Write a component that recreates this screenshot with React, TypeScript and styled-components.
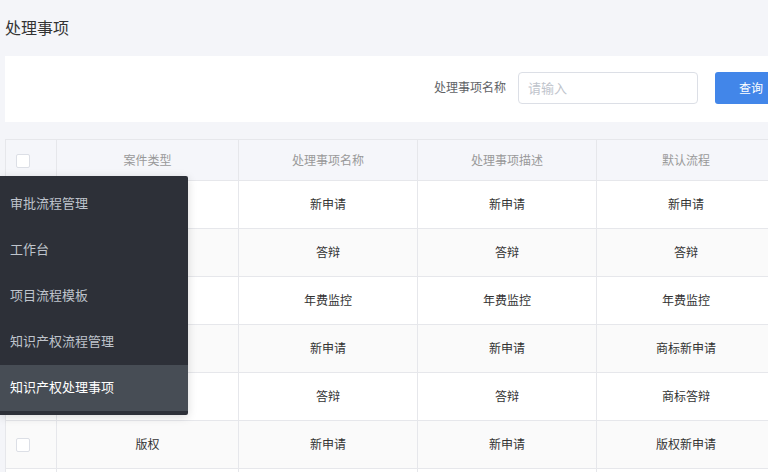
import React from 'react';
import styled, { createGlobalStyle } from 'styled-components';

const GlobalStyle = createGlobalStyle`
  html, body {
    margin: 0;
    padding: 0;
    background: #f4f5f9;
    overflow: hidden;
  }
  body {
    font-family: "Noto Sans CJK SC", "Noto Sans", sans-serif;
    color: #333;
  }
`;

interface RowType {
  caseType: string;
  name: string;
  desc: string;
  flow: string;
}

const rows: RowType[] = [
  { caseType: '专利', name: '新申请', desc: '新申请', flow: '新申请' },
  { caseType: '专利', name: '答辩', desc: '答辩', flow: '答辩' },
  { caseType: '专利', name: '年费监控', desc: '年费监控', flow: '年费监控' },
  { caseType: '商标', name: '新申请', desc: '新申请', flow: '商标新申请' },
  { caseType: '商标', name: '答辩', desc: '答辩', flow: '商标答辩' },
  { caseType: '版权', name: '新申请', desc: '新申请', flow: '版权新申请' },
];

const menuItems = ['审批流程管理', '工作台', '项目流程模板', '知识产权流程管理', '知识产权处理事项'];

const App: React.FC = () => {
  return (
    <Page>
      <GlobalStyle />
      <Content>
        <Title>处理事项</Title>
        <SearchPanel>
          <FieldLabel>处理事项名称</FieldLabel>
          <SearchInput placeholder="请输入" />
          <SearchButton>查询</SearchButton>
        </SearchPanel>
        <Table>
          <colgroup>
            <col style={{ width: 51 }} />
            <col style={{ width: 182 }} />
            <col style={{ width: 179 }} />
            <col style={{ width: 179 }} />
            <col style={{ width: 179 }} />
          </colgroup>
          <thead>
            <tr>
              <HeadCell>
                <Checkbox />
              </HeadCell>
              <HeadCell>案件类型</HeadCell>
              <HeadCell>处理事项名称</HeadCell>
              <HeadCell>处理事项描述</HeadCell>
              <HeadCell>默认流程</HeadCell>
            </tr>
          </thead>
          <tbody>
            {rows.map((row, i) => (
              <BodyRow key={i} striped={i % 2 === 1}>
                <Cell>
                  <Checkbox />
                </Cell>
                <Cell>{row.caseType}</Cell>
                <Cell>{row.name}</Cell>
                <Cell>{row.desc}</Cell>
                <Cell>{row.flow}</Cell>
              </BodyRow>
            ))}
            <BodyRow striped={false}>
              <Cell />
              <Cell />
              <Cell />
              <Cell />
              <Cell />
            </BodyRow>
          </tbody>
        </Table>
      </Content>
      <Menu>
        {menuItems.map((item, i) => (
          <MenuItem key={item} active={i === menuItems.length - 1}>
            {item}
          </MenuItem>
        ))}
      </Menu>
    </Page>
  );
};

// Styled Components

const Page = styled.div`
  position: relative;
  width: 768px;
  height: 472px;
  overflow: hidden;
  padding-left: 5px;
  box-sizing: border-box;
`;

const Content = styled.div`
  width: 800px;
`;

const Title = styled.div`
  height: 56px;
  padding-bottom: 3px;
  box-sizing: border-box;
  display: flex;
  align-items: center;
  font-size: 16px;
  color: #333;
`;

const SearchPanel = styled.div`
  height: 66px;
  box-sizing: border-box;
  background: #fff;
  display: flex;
  align-items: flex-start;
  justify-content: flex-end;
  padding: 16px 18px 0 0;
`;

const FieldLabel = styled.label`
  font-size: 12px;
  color: #606266;
  line-height: 30px;
  margin-right: 12px;
`;

const SearchInput = styled.input`
  width: 180px;
  height: 32px;
  box-sizing: border-box;
  border: 1px solid #dcdfe6;
  border-radius: 4px;
  padding: 0 9px 2px;
  font-family: inherit;
  font-size: 13px;
  color: #606266;
  outline: none;

  &::placeholder {
    color: #c0c4cc;
  }
`;

const SearchButton = styled.button`
  margin-left: 17px;
  width: 72px;
  height: 32px;
  padding: 0 0 2px;
  border: none;
  border-radius: 3px;
  background: #4286e9;
  color: #fff;
  font-family: inherit;
  font-size: 12px;
  cursor: pointer;
`;

const Table = styled.table`
  margin-top: 17px;
  width: 770px;
  table-layout: fixed;
  border-collapse: collapse;
  font-size: 12px;
`;

const HeadCell = styled.th`
  height: 38px;
  padding: 0 0 2px;
  background: #f5f6fa;
  border: 1px solid #e6e7eb;
  font-weight: normal;
  color: #999;
  text-align: center;

  &:first-child {
    text-align: left;
    padding-left: 10px;
  }
`;

const BodyRow = styled.tr<{ striped: boolean }>`
  background: ${(props) => (props.striped ? '#fafafa' : '#fff')};
`;

const Cell = styled.td`
  height: 45px;
  padding: 0 0 2px;
  border: 1px solid #e6e7eb;
  color: #333;
  text-align: center;

  &:first-child {
    text-align: left;
    padding-left: 10px;
  }
`;

const Checkbox = styled.span`
  display: inline-block;
  vertical-align: middle;
  width: 14px;
  height: 14px;
  box-sizing: border-box;
  border: 1px solid #dcdfe6;
  border-radius: 2px;
  background: #fff;
`;

const Menu = styled.ul`
  position: absolute;
  left: 0;
  top: 176px;
  width: 188px;
  margin: 0;
  padding: 5px 0 4px;
  list-style: none;
  background: #2d3038;
  border-radius: 0 2px 2px 0;
  box-shadow: 0 2px 10px rgba(0, 0, 0, 0.15);
`;

const MenuItem = styled.li<{ active: boolean }>`
  height: 46px;
  box-sizing: border-box;
  display: flex;
  align-items: center;
  padding: 0 0 4px 10px;
  font-size: 13px;
  color: ${(props) => (props.active ? '#fff' : '#bfc4cc')};
  background: ${(props) => (props.active ? '#474d55' : 'transparent')};
`;

export default App;
